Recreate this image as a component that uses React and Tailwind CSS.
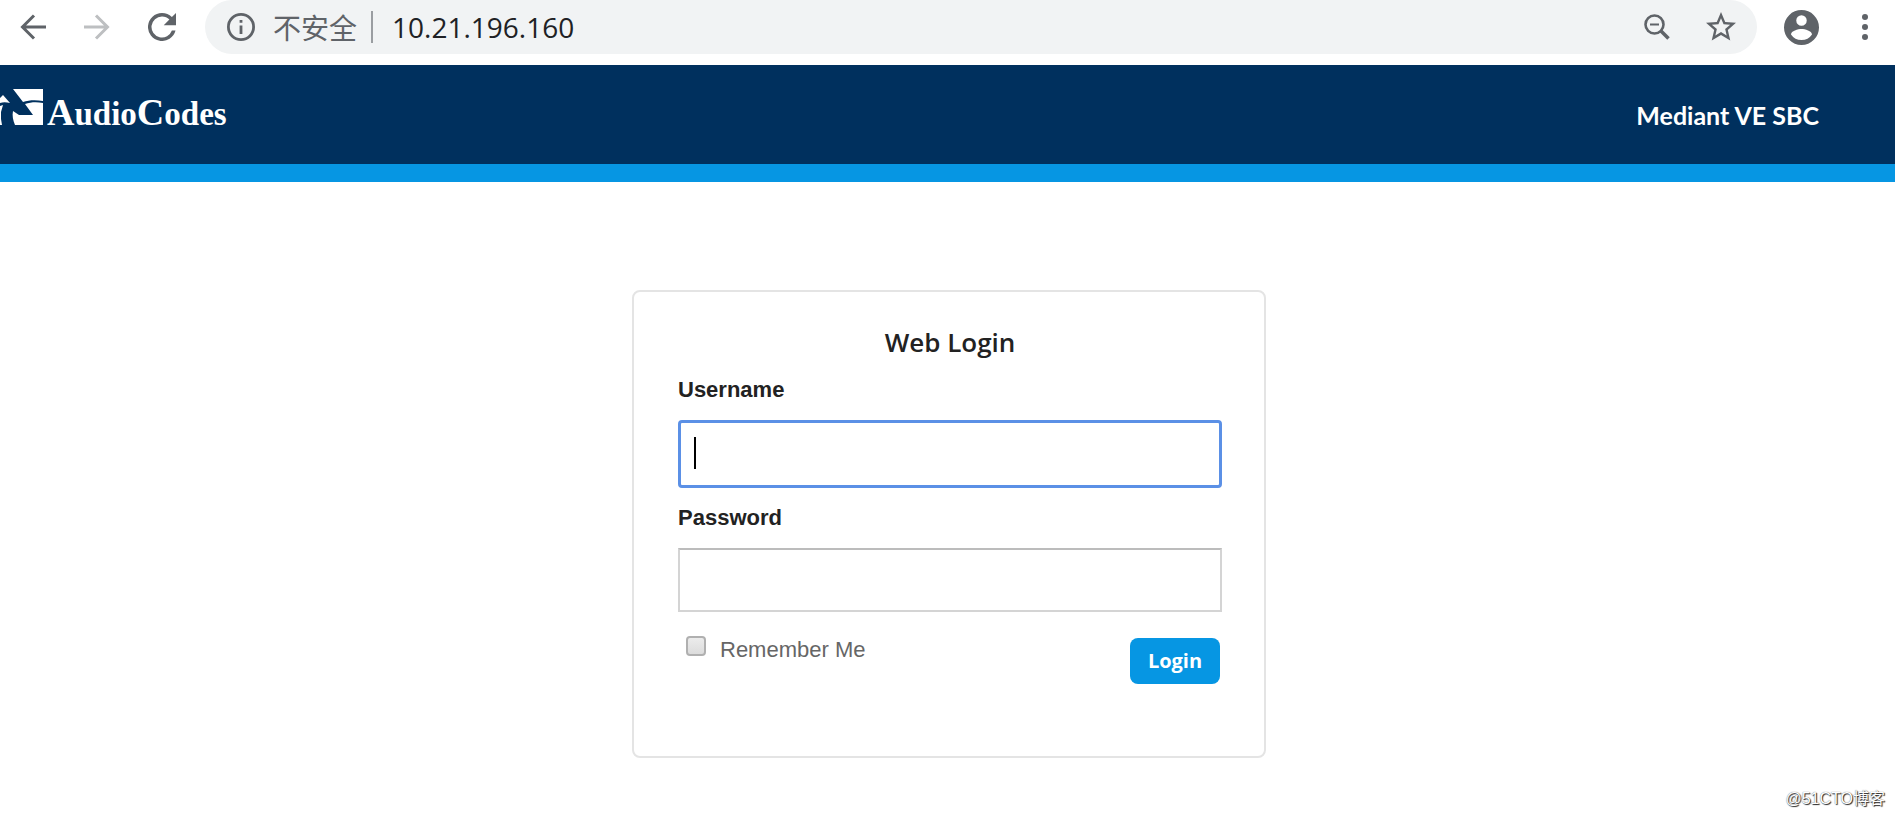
import React, { useState } from "react";

function BrowserBar() {
  return (
    <div className="flex items-center h-[65px] pb-[11px] pl-5 pr-[27px] bg-white text-[#5f6368]">
      <button type="button" aria-label="Back" className="w-[26px] shrink-0">
        <svg viewBox="0 0 26 26" className="w-[26px] h-[26px]" fill="none" stroke="currentColor" strokeWidth="3">
          <path d="M26 13H2.5M14 1.5L2.5 13L14 24.5" />
        </svg>
      </button>
      <button type="button" aria-label="Forward" className="w-[26px] ml-[38px] shrink-0 text-[#bdbfc1]">
        <svg viewBox="0 0 26 26" className="w-[26px] h-[26px]" fill="none" stroke="currentColor" strokeWidth="3">
          <path d="M0 13H23.5M12 1.5L23.5 13L12 24.5" />
        </svg>
      </button>
      <button type="button" aria-label="Reload" className="w-7 ml-[38px] mr-[29px] shrink-0">
        <svg viewBox="4 4 16 16" className="w-7 h-7" fill="currentColor">
          <path d="M17.65 6.35A7.96 7.96 0 0 0 12 4a8 8 0 1 0 7.73 10h-2.08A6 6 0 1 1 12 6c1.66 0 3.14.69 4.22 1.78L13 11h7V4z" />
        </svg>
      </button>

      <div className="flex items-center flex-1 h-[54px] pl-[22px] pr-[21px] rounded-r-[27px] rounded-l-[27px] bg-[#f1f3f4]">
        <svg viewBox="2 2 20 20" className="w-7 h-7 shrink-0" fill="currentColor">
          <path d="M11 7h2v2h-2zm0 4h2v6h-2zm1-9a10 10 0 1 0 0 20 10 10 0 0 0 0-20zm0 18a8 8 0 1 1 0-16 8 8 0 0 1 0 16z" />
        </svg>
        <span className="ml-[18px] text-[28px] leading-8 whitespace-nowrap font-['Noto_Sans_CJK_SC',sans-serif]">不安全</span>
        <span className="w-[2px] h-[32px] ml-[14px] mr-[19px] bg-[#9a9da1]"></span>
        <input
          type="text"
          aria-label="Address"
          defaultValue="10.21.196.160"
          className="flex-1 min-w-0 text-[28px] leading-8 text-[#202124] bg-transparent outline-none font-['Open_Sans',sans-serif]"
        />
        <button type="button" aria-label="Zoom out" className="shrink-0">
          <svg viewBox="0 0 26 26" className="w-[26px] h-[26px]" fill="none" stroke="currentColor">
            <circle cx="10.5" cy="10.5" r="9" strokeWidth="2.6" />
            <path d="M6 10.5H15" strokeWidth="2" />
            <path d="M17 17L24.5 24.5" strokeWidth="3.6" />
          </svg>
        </button>
        <button type="button" aria-label="Bookmark" className="ml-9 shrink-0">
          <svg viewBox="2 2 20 20" className="w-[30px] h-[30px]" fill="currentColor">
            <path d="M22 9.24l-7.19-.62L12 2 9.19 8.63 2 9.24l5.46 4.73L5.82 21 12 17.27 18.18 21l-1.63-7.03zM12 15.4l-3.76 2.27 1-4.28-3.32-2.88 4.38-.38L12 6.1l1.71 4.04 4.38.38-3.32 2.88 1 4.28z" />
          </svg>
        </button>
      </div>

      <button type="button" aria-label="Profile" className="ml-[27px] shrink-0">
        <svg viewBox="2 2 20 20" className="w-[35px] h-[35px]" fill="currentColor">
          <path d="M12 2a10 10 0 1 0 0 20 10 10 0 0 0 0-20zm0 3a3 3 0 1 1 0 6 3 3 0 0 1 0-6zm0 14.2a7.2 7.2 0 0 1-6-3.22c.03-1.99 4-3.08 6-3.08s5.97 1.09 6 3.08a7.2 7.2 0 0 1-6 3.22z" />
        </svg>
      </button>
      <button type="button" aria-label="Menu" className="ml-[43px] shrink-0">
        <svg viewBox="0 0 6 26" className="w-[6px] h-[26px]" fill="currentColor">
          <circle cx="3" cy="3" r="3" />
          <circle cx="3" cy="13" r="3" />
          <circle cx="3" cy="23" r="3" />
        </svg>
      </button>
    </div>
  );
}

function Header() {
  return (
    <header className="flex items-center justify-between h-[117px] pr-[76px] bg-[#00305e] border-b-[18px] border-[#0696e3] text-white">
      <a href="/" className="flex items-end pb-[6px]">
        <svg viewBox="0 0 43 36" className="w-[43px] h-9 mb-[9px]" fill="#fff">
          <path d="M0 9L3 6L10 14C6 13 3 13 0 14z" />
          <path d="M0 17L3 16L1 23V30L2 36H0z" />
          <path d="M13 0H43V12C36 11 29 11 23 13z" />
          <path d="M25 15C31 13 37 13 43 14V36H15C13 31 12 27 13 22L19 26H33z" />
        </svg>
        <span className="ml-1 text-[33px] leading-10 font-bold font-['Liberation_Serif',serif]">
          <span className="text-[38px]">A</span>udio<span className="text-[38px]">C</span>odes
        </span>
      </a>
      <h1 className="text-[25px] leading-8 font-bold font-['Lato',sans-serif]">Mediant VE SBC</h1>
    </header>
  );
}

function LoginForm() {
  const [username, setUsername] = useState("");
  const [password, setPassword] = useState("");
  const [remember, setRemember] = useState(false);

  return (
    <form
      onSubmit={(e) => e.preventDefault()}
      className="w-full max-w-[634px] pl-11 pr-[42px] pt-8 pb-[72px] border-2 border-[#e4e4e4] rounded-lg font-['Liberation_Sans',sans-serif]"
    >
      <h2 className="text-center text-[26px] leading-9 font-semibold text-[#222] font-['Open_Sans',sans-serif]">Web Login</h2>

      <label htmlFor="username" className="block mt-3 text-[22px] leading-9 font-bold text-[#222]">Username</label>
      <div className="relative mt-3">
        <input
          type="text"
          id="username"
          name="username"
          value={username}
          onChange={(e) => setUsername(e.target.value)}
          className="block w-full h-[68px] px-4 text-[26px] border-[3px] border-[#5b90e6] rounded-[4px] outline-none caret-transparent"
        />
        {username === "" && <span className="absolute left-4 top-[17px] w-[2px] h-8 bg-black"></span>}
      </div>

      <label htmlFor="password" className="block mt-3 text-[22px] leading-9 font-bold text-[#222]">Password</label>
      <input
        type="password"
        id="password"
        name="password"
        value={password}
        onChange={(e) => setPassword(e.target.value)}
        className="block w-full h-16 mt-3 px-4 text-[26px] border-2 border-[#d4d4d4] border-t-[#bcbcbc] outline-none"
      />

      <div className="flex items-start justify-between mt-6 pl-2 pr-[2px]">
        <label htmlFor="remember" className="flex items-start text-[22px] text-[#666]">
          <input
            type="checkbox"
            id="remember"
            checked={remember}
            onChange={(e) => setRemember(e.target.checked)}
            className="appearance-none w-5 h-5 border-2 border-[#b0b0b0] rounded-[4px] bg-linear-to-b from-[#ececec] to-[#dcdcdc]"
          />
          <span className="ml-[14px] leading-7">Remember Me</span>
        </label>
        <button
          type="submit"
          className="w-[90px] h-[46px] mt-[2px] rounded-lg bg-[#0696e3] text-[20px] leading-7 font-bold text-white font-['Open_Sans',sans-serif]"
        >
          Login
        </button>
      </div>
    </form>
  );
}

function App() {
  return (
    <div className="flex flex-col min-h-screen bg-white">
      <BrowserBar />
      <Header />
      <main className="flex flex-1 justify-center items-start pl-[3px] pt-[108px]">
        <LoginForm />
      </main>
      <footer className="flex justify-end pr-[10px] pb-[6px] text-[16px] leading-5 text-white [text-shadow:1px_1px_1px_#222,0_0_1px_#555] font-['Liberation_Sans','Noto_Sans_CJK_SC',sans-serif]">
        @51CTO博客
      </footer>
    </div>
  );
}

export default App;
